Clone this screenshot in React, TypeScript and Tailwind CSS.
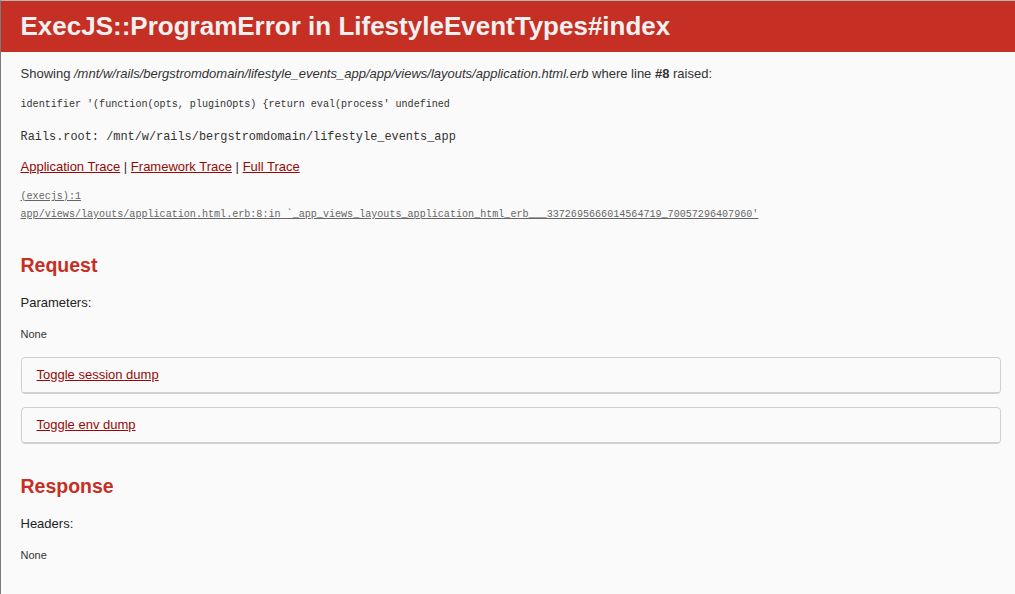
import React from "react";

const sans = { fontFamily: '"Liberation Sans", Arial, Helvetica, sans-serif' };

export default function App() {
  return (
    <div
      className="min-h-[594px] bg-[#FAFAFA] text-[#333] border-l border-l-[#7a7a7a] border-t border-t-[#b4b4b4] font-['Liberation_Sans',Arial,sans-serif] text-[13px] leading-[18px]"
      style={sans}
    >
      <header className="h-[51px] bg-[#C52F24] text-[#F0F0F0] px-[19.5px] flex items-center">
        <h1 className="text-[26px] font-bold leading-[29px]">
          ExecJS::ProgramError in LifestyleEventTypes#index
        </h1>
      </header>

      <div className="px-[19.5px] pb-[30px]">
        <p className="mt-[13px]">
          Showing <i>/mnt/w/rails/bergstromdomain/lifestyle_events_app/app/views/layouts/application.html.erb</i> where line <b>#8</b> raised:
        </p>
        <pre className="mt-[13px] font-['Liberation_Mono',monospace] text-[10.08px] leading-[18px] whitespace-pre-wrap">
          <code>identifier '(function(opts, pluginOpts) {"{"}return eval(process' undefined</code>
        </pre>

        <p className="mt-[13px]">
          <code className="font-['Liberation_Mono',monospace] text-[11.9px]">
            Rails.root: /mnt/w/rails/bergstromdomain/lifestyle_events_app
          </code>
        </p>

        <div className="mt-[12px]">
          <a href="#" className="text-[#980905] underline">Application Trace</a> |{" "}
          <a href="#" className="text-[#980905] underline">Framework Trace</a> |{" "}
          <a href="#" className="text-[#980905] underline">Full Trace</a>
        </div>
        <pre className="mt-[12px] font-['Liberation_Mono',monospace] text-[10.08px] leading-[18px] whitespace-pre-wrap">
          <code>
            <a href="#" className="text-[#666] underline">(execjs):1</a>
            <br />
            <a href="#" className="text-[#666] underline">
              app/views/layouts/application.html.erb:8:in `_app_views_layouts_application_html_erb___3372695666014564719_70057296407960'
            </a>
          </code>
        </pre>

        <h2 className="mt-[29px] text-[19.5px] leading-[25px] font-bold text-[#C52F24]">Request</h2>
        <p className="mt-[16px] text-[#222]">Parameters:</p>
        <pre className="mt-[13px] text-[11px] leading-[18px]" style={sans}>None</pre>

        <div className="mt-[14px] w-[980px] border border-[#D0D0D0] rounded-[4px]">
          <div className="px-[15px] py-[8px] border-b border-[#D0D0D0]">
            <a href="#" className="text-[#980905] underline">Toggle session dump</a>
          </div>
        </div>
        <div className="mt-[13px] w-[980px] border border-[#D0D0D0] rounded-[4px]">
          <div className="px-[15px] py-[8px] border-b border-[#D0D0D0]">
            <a href="#" className="text-[#980905] underline">Toggle env dump</a>
          </div>
        </div>

        <h2 className="mt-[30px] text-[19.5px] leading-[25px] font-bold text-[#C52F24]">Response</h2>
        <p className="mt-[16px] text-[#222]">Headers:</p>
        <pre className="mt-[13px] text-[11px] leading-[18px]" style={sans}>None</pre>
      </div>
    </div>
  );
}
